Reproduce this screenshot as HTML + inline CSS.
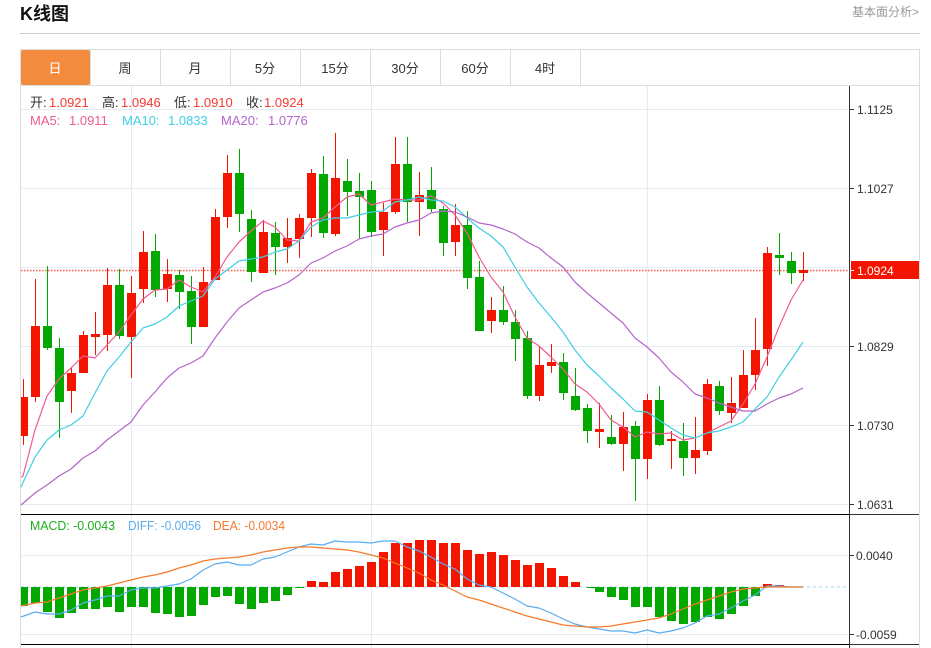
<!DOCTYPE html>
<html lang="zh">
<head>
<meta charset="utf-8">
<title>K线图</title>
<style>
html,body{margin:0;padding:0;background:#fff;width:931px;height:648px;overflow:hidden}
svg{display:block;position:absolute;left:0;top:0}
text{font-family:"Liberation Sans","Noto Sans CJK SC",sans-serif}
</style>
</head>
<body>
<svg width="931" height="648" viewBox="0 0 931 648" xmlns="http://www.w3.org/2000/svg">
<rect width="931" height="648" fill="#fff"/>
<text x="20" y="20" font-size="18" font-weight="700" fill="#111">K线图</text>
<text x="919" y="16" font-size="12" fill="#999" text-anchor="end">基本面分析&gt;</text>
<g shape-rendering="crispEdges">
<path d="M20 33.5H920" stroke="#ccc" fill="none"/>
<path d="M20.5 49V648M919.5 49V648M20 49.5H920M20 85.5H920M90.5 49V85M160.5 49V85M230.5 49V85M300.5 49V85M370.5 49V85M440.5 49V85M510.5 49V85M580.5 49V85" stroke="#ddd" fill="none"/>
</g>
<rect x="21" y="50" width="69" height="35" rx="2" fill="#F38B3F"/>
<g font-size="13" fill="#333" text-anchor="middle">
<text x="55" y="73" fill="#fff">日</text>
<text x="125" y="73">周</text>
<text x="195" y="73">月</text>
<text x="265" y="73">5分</text>
<text x="335" y="73">15分</text>
<text x="405" y="73">30分</text>
<text x="475" y="73">60分</text>
<text x="545" y="73">4时</text>
</g>
<g shape-rendering="crispEdges" fill="none" stroke="#E3ECF2">
<path d="M21 109.5H849M21 188.5H849M21 267.5H849M21 346.5H849M21 425.5H849M21 504.5H849M21 555.5H849M21 634.5H849"/>
<path d="M131.5 86V648M371.5 86V648M647.5 86V648"/>
</g>
<path d="M21 270.5H849" stroke="#FF5A4A" stroke-width="1.5" stroke-dasharray="1.5 1.5" fill="none"/>
<path d="M21 587H849" stroke="#BDE3F3" stroke-width="1.5" stroke-dasharray="3 3" fill="none"/>
<g shape-rendering="crispEdges" fill="none">
<path stroke="#F41500" d="M23.5 379V445M35.5 279V402M71.5 368V413M83.5 331V373M95.5 312V355M107.5 268V351M131.5 276V378M143.5 231V303M167.5 259V302M203.5 267V327M215.5 209V280M227.5 155V228M263.5 220V273M287.5 218V263M299.5 214V258M311.5 169V237M335.5 133V236M383.5 203V256M395.5 137V214M419.5 172V236M455.5 204V256M491.5 297V333M539.5 346V401M551.5 344V373M599.5 403V448M623.5 412V471M647.5 394V479M671.5 431V469M695.5 417V474M707.5 379V455M731.5 377V423M743.5 350V408M755.5 318V390M767.5 247V366M803.5 252V281"/>
<path stroke="#F41500" stroke-width="9" d="M35.5 326V397M71.5 373V391M83.5 335V373M95.5 334V337M107.5 285V335M131.5 293V337M143.5 252V289M167.5 274V289M203.5 282V327M215.5 217V280M227.5 173V217M263.5 232V273M287.5 238V247M299.5 218V239M311.5 173V218M335.5 178V234M383.5 212V230M395.5 164V212M419.5 195V202M455.5 225V242M491.5 310V321M539.5 365V396M551.5 362V366M599.5 429V432M623.5 427V444M647.5 400V459M671.5 439V441M695.5 450V458M707.5 384V451M731.5 403V413M743.5 375V408M755.5 350V375M767.5 253V349M803.5 270V273"/>
<rect x="21" y="397" width="7" height="39" fill="#F41500"/>
<path stroke="#02A800" d="M47.5 266V350M59.5 338V438M119.5 269V339M155.5 234V297M179.5 270V309M191.5 276V344M239.5 149V232M251.5 210V282M275.5 222V275M323.5 156V238M347.5 159V216M359.5 173V239M371.5 181V237M407.5 137V222M431.5 167V212M443.5 206V256M467.5 211V289M479.5 261V331M503.5 286V325M515.5 310V361M527.5 331V399M563.5 353V400M575.5 368V411M587.5 404V443M611.5 415V445M635.5 421V501M659.5 386V446M683.5 423V476M719.5 381V415M779.5 233V275M791.5 252V284"/>
<path stroke="#02A800" stroke-width="9" d="M47.5 326V348M59.5 348V402M119.5 285V336M155.5 251V290M179.5 275V292M191.5 291V327M239.5 173V214M251.5 219V272M275.5 233V247M323.5 174V233M347.5 181V192M359.5 191V197M371.5 190V232M407.5 164V202M431.5 190V209M443.5 209V243M467.5 225V278M479.5 277V331M503.5 310V322M515.5 322V339M527.5 338V396M563.5 362V393M575.5 396V410M587.5 408V431M611.5 437V444M635.5 426V459M659.5 400V445M683.5 441V458M719.5 386V411M779.5 255V258M791.5 261V273"/>
<path stroke="#02A800" stroke-width="9" d="M35.5 587V603M47.5 587V612M59.5 587V618M71.5 587V613M83.5 587V609M95.5 587V609M107.5 587V607M119.5 587V612M131.5 587V607M143.5 587V607M155.5 587V613M167.5 587V614M179.5 587V617M191.5 587V616M203.5 587V605M215.5 587V597M227.5 587V596M239.5 587V604M251.5 587V609M263.5 587V603M275.5 587V601M287.5 587V595M299.5 587V588M599.5 587V592M611.5 587V597M623.5 587V600M635.5 587V607M647.5 587V607M659.5 587V617M671.5 587V621M683.5 587V624M695.5 587V622M707.5 587V617M719.5 587V619M731.5 587V614M743.5 587V606M755.5 587V596"/>
<path stroke="#02A800" d="M587 587.5H596"/>
<rect x="21" y="587" width="7" height="19" fill="#02A800"/>
<path stroke="#F41500" stroke-width="9" d="M311.5 581V587M323.5 582V587M335.5 572V587M347.5 569V587M359.5 566V587M371.5 562V587M383.5 552V587M395.5 543V587M407.5 543V587M419.5 540V587M431.5 540V587M443.5 543V587M455.5 543V587M467.5 550V587M479.5 554V587M491.5 552V587M503.5 555V587M515.5 560V587M527.5 565V587M539.5 563V587M551.5 568V587M563.5 576V587M575.5 582V587M767.5 584V587M779.5 585V587"/>
</g>
<g fill="none" stroke-width="1.2" stroke-linejoin="round">
<polyline stroke="#EF5B92" points="21,477 23,476 35,430 47,396 59,379 71,368 83,356 95,358 107,345 119,332 131,315 143,299 155,290 167,289 179,280 191,287 203,292 215,277 227,257 239,242 251,231 263,221 275,227 287,240 299,241 311,222 323,218 335,207 347,197 359,194 371,205 383,202 395,199 407,200 419,200 431,196 443,203 455,215 467,233 479,257 491,277 503,292 515,317 527,338 539,346 551,357 563,369 575,384 587,392 599,404 611,420 623,427 635,437 647,432 659,434 671,433 683,440 695,438 707,433 719,427 731,421 743,404 755,384 767,357 779,327 791,300 803,280"/>
<polyline stroke="#3FCFE4" points="21,487 35,457 47,440 59,430 71,425 83,416 95,393 107,371 119,357 131,342 143,328 155,324 167,317 179,306 191,301 203,296 215,279 227,270 239,261 251,259 263,257 275,252 287,249 299,241 311,227 323,220 335,218 347,218 359,215 371,212 383,211 395,202 407,200 419,197 431,200 443,201 455,207 467,218 479,228 491,236 503,247 515,267 527,287 539,303 551,317 563,332 575,350 587,365 599,376 611,388 623,399 635,411 647,412 659,420 671,428 683,435 695,438 707,433 719,431 731,427 743,422 755,409 767,397 779,377 791,360 803,342"/>
<polyline stroke="#B465CC" points="21,505 35,493 47,485 59,476 71,469 83,458 95,451 107,440 119,431 131,422 143,405 155,392 167,378 179,368 191,363 203,356 215,338 227,322 239,308 251,300 263,292 275,288 287,283 299,275 311,263 323,258 335,251 347,246 359,239 371,236 383,234 395,227 407,223 419,220 431,213 443,211 455,212 467,217 479,223 491,225 503,229 515,234 527,242 539,248 551,258 563,267 575,282 587,293 599,303 611,313 623,323 635,338 647,347 659,358 671,372 683,382 695,394 707,398 719,403 731,407 743,411 755,411 767,404 779,398 791,394 803,388"/>
<polyline stroke="#5AADF0" points="21,617 35,612 47,614 59,614 71,610 83,603 95,600 107,596 119,596 131,590 143,588 155,588 167,586 179,584 191,579 203,570 215,564 227,562 239,565 251,565 263,559 275,557 287,552 299,547 311,544 323,545 335,541 347,542 359,542 371,543 383,541 395,541 407,547 419,551 431,557 443,564 455,569 467,579 479,585 491,587 503,593 515,599 527,606 539,608 551,613 563,619 575,624 587,627 599,629 611,631 623,631 635,633 647,630 659,633 671,631 683,628 695,623 707,616 719,614 731,608 743,601 755,595 767,586 779,586 791,587 803,587"/>
<polyline stroke="#F77A2D" points="21,606 35,603 47,602 59,598 71,594 83,590 95,588 107,586 119,583 131,580 143,577 155,575 167,572 179,568 191,565 203,561 215,559 227,558 239,557 251,555 263,552 275,550 287,548 299,547 311,547 323,548 335,549 347,550 359,552 371,555 383,558 395,563 407,568 419,573 431,580 443,585 455,591 467,597 479,600 491,604 503,608 515,612 527,616 539,619 551,622 563,625 575,626 587,627 599,627 611,626 623,624 635,622 647,620 659,618 671,614 683,609 695,604 707,600 719,596 731,592 743,589 755,588 767,587 779,587 803,587"/>
</g>
<g shape-rendering="crispEdges" fill="none">
<path stroke="#000" d="M21 514.5H849M21 644.5H849"/>
<path stroke="#333" d="M849.5 86V648M849 514.5H919M849 644.5H919M850 109.5H854M850 188.5H854M850 346.5H854M850 425.5H854M850 504.5H854M850 555.5H854M850 634.5H854"/>
</g>
<rect x="851" y="261" width="68" height="18" fill="#F41500"/>
<path d="M850 270.5H854" stroke="#fff" shape-rendering="crispEdges"/>
<g font-size="12" fill="#333">
<text x="857" y="114">1.1125</text>
<text x="857" y="193">1.1027</text>
<text x="857" y="275" fill="#fff">1.0924</text>
<text x="857" y="351">1.0829</text>
<text x="857" y="430">1.0730</text>
<text x="857" y="509">1.0631</text>
<text x="856" y="560">0.0040</text>
<text x="856" y="639">-0.0059</text>
</g>
<g font-size="13">
<text x="30" y="107" fill="#333">开:</text><text x="49" y="107" fill="#F43A32">1.0921</text>
<text x="102" y="107" fill="#333">高:</text><text x="121" y="107" fill="#F43A32">1.0946</text>
<text x="174" y="107" fill="#333">低:</text><text x="193" y="107" fill="#F43A32">1.0910</text>
<text x="246" y="107" fill="#333">收:</text><text x="264" y="107" fill="#F43A32">1.0924</text>
<g fill="#EF5B92"><text x="30" y="125">MA5:</text><text x="69" y="125">1.0911</text></g>
<g fill="#3FCFE4"><text x="122" y="125">MA10:</text><text x="168" y="125">1.0833</text></g>
<g fill="#B465CC"><text x="221" y="125">MA20:</text><text x="268" y="125">1.0776</text></g>
<text x="30" y="530" fill="#1CAD1C" textLength="85" lengthAdjust="spacingAndGlyphs">MACD: -0.0043</text>
<text x="128" y="530" fill="#5AADF0" textLength="73" lengthAdjust="spacingAndGlyphs">DIFF: -0.0056</text>
<text x="213" y="530" fill="#F77A2D" textLength="72" lengthAdjust="spacingAndGlyphs">DEA: -0.0034</text>
</g>
</svg>
</body>
</html>
